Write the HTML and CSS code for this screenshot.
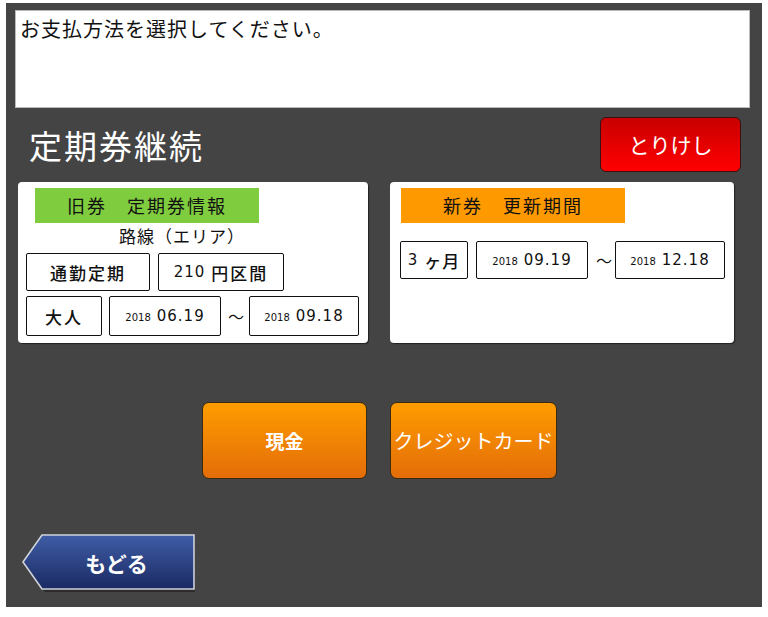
FILE: index.html
```html
<!DOCTYPE html>
<html lang="ja">
<head>
    <meta charset="UTF-8">
    <title>定期券継続 - お支払方法</title>
    <link rel="stylesheet" href="styles.css">
</head>
<body>
    <div class="screen">
        <div class="message">お支払方法を選択してください。</div>

        <div class="title-row">
            <h1>定期券継続</h1>
            <button class="btn-cancel">とりけし</button>
        </div>

        <div class="cards">
            <div class="card card-old">
                <div class="label label-green">旧券　定期券情報</div>
                <div class="route">路線（エリア）</div>
                <div class="box-row row-first">
                    <div class="box w-kind">通勤定期</div>
                    <div class="box w-fare"><span class="num spaced">210</span>円区間</div>
                </div>
                <div class="box-row">
                    <div class="box w-age">大人</div>
                    <div class="box w-date"><span class="year">2018</span><span class="num">06.19</span></div>
                    <span class="tilde">～</span>
                    <div class="box w-date2"><span class="year">2018</span><span class="num">09.18</span></div>
                </div>
            </div>

            <div class="card card-new">
                <div class="label label-orange">新券　更新期間</div>
                <div class="box-row row-new">
                    <div class="box w-months"><span class="num spaced">3</span>ヶ月</div>
                    <div class="box w-date"><span class="year">2018</span><span class="num">09.19</span></div>
                    <span class="tilde">～</span>
                    <div class="box w-date2"><span class="year">2018</span><span class="num">12.18</span></div>
                </div>
            </div>
        </div>

        <div class="pay-row">
            <button class="btn-pay pay-cash">現金</button>
            <button class="btn-pay pay-card">クレジットカード</button>
        </div>

        <div class="back-row">
            <button class="btn-back">
                <svg class="back-shape" width="175" height="58" viewBox="0 0 175 58">
                    <defs>
                        <linearGradient id="backGrad" x1="0" y1="0" x2="0" y2="1">
                            <stop offset="0" stop-color="#3f5da6"/>
                            <stop offset="1" stop-color="#1b2a63"/>
                        </linearGradient>
                    </defs>
                    <polygon points="4,30 23,2 173,2 173,58 23,58" fill="#1a1a1a" opacity="0.6"/>
                    <polygon points="1,28 20,1 172,1 172,55 20,55" fill="url(#backGrad)" stroke="#cfd3da" stroke-width="1.6"/>
                </svg>
                <span class="back-text">もどる</span>
            </button>
        </div>
    </div>
</body>
</html>
```

FILE: styles.css
```css
body {
    margin: 0;
    background: #fff;
    font-family: "Noto Sans CJK JP", "DejaVu Sans", sans-serif;
}
.screen {
    margin: 3px 0 0 6px;
    width: 756px;
    height: 604px;
    background-color: #444;
    box-sizing: border-box;
    padding: 7px 12px 0 9px;
    display: flex;
    flex-direction: column;
}
.message {
    height: 98px;
    background: #fff;
    border: 1px solid #bbb;
    box-sizing: border-box;
    padding: 5px 4px;
    font-size: 20px;
    line-height: 26px;
    letter-spacing: 1px;
    color: #111;
}
.title-row {
    display: flex;
    justify-content: space-between;
    align-items: center;
    margin-top: 9px;
    padding-left: 14px;
}
h1 {
    margin: 0;
    font-size: 33px;
    font-weight: normal;
    color: #fff;
    letter-spacing: 2px;
}
.btn-cancel {
    width: 141px;
    height: 55px;
    border: 1px solid #3a1010;
    border-radius: 6px;
    background: linear-gradient(#c90000, #ff0000);
    color: #fff;
    font-family: inherit;
    font-size: 21px;
    padding: 0 0 2px;
    margin-right: 9px;
}
.cards {
    display: flex;
    gap: 22px;
    margin-top: 10px;
    padding-left: 3px;
}
.card {
    background: #fff;
    border-radius: 4px;
    height: 161px;
    box-sizing: border-box;
    padding-top: 6px;
    box-shadow: 1px 1px 1px rgba(0, 0, 0, 0.5);
}
.card-old {
    width: 350px;
    padding-left: 8px;
}
.card-new {
    width: 344px;
    padding-left: 10px;
}
.label {
    width: 224px;
    height: 35px;
    line-height: 35px;
    text-align: center;
    font-size: 18px;
    letter-spacing: 2px;
    color: #111;
}
.label-green {
    background-color: #7fcc3f;
    margin-left: 9px;
}
.label-orange {
    background-color: #ff9900;
    margin-left: 1px;
}
.route {
    text-align: center;
    width: 312px;
    font-size: 17px;
    line-height: 20px;
    letter-spacing: 1px;
    margin-top: 3px;
    color: #111;
}
.box-row {
    display: flex;
    align-items: center;
    gap: 7px;
    margin-top: 5px;
}
.row-first {
    margin-top: 7px;
    gap: 8px;
}
.row-new {
    margin-top: 18px;
    gap: 8px;
}
.box {
    height: 40px;
    border: 1.5px solid #111;
    border-radius: 2px;
    box-sizing: border-box;
    display: flex;
    align-items: center;
    justify-content: center;
    font-size: 17px;
    font-weight: 500;
    letter-spacing: 2px;
    color: #111;
}
.row-first .box {
    height: 38px;
}
.row-new .box {
    height: 38px;
}
.w-kind { width: 124px; }
.w-fare { width: 126px; }
.w-age { width: 76px; }
.w-date { width: 112px; }
.w-date2 { width: 110px; }
.w-months { width: 68px; letter-spacing: 1px; }
.num {
    font-family: "DejaVu Sans", sans-serif;
    font-size: 15px;
    letter-spacing: 1px;
}
.num.spaced {
    margin-right: 6px;
}
.box .year {
    font-family: "DejaVu Sans", sans-serif;
    font-size: 10px;
    letter-spacing: 0;
    margin-right: 6px;
    padding-top: 3px;
}
.tilde {
    font-size: 16px;
    color: #111;
    width: 14px;
    text-align: center;
}
.row-new .tilde {
    width: 11px;
}
.pay-row {
    display: flex;
    gap: 23px;
    margin-top: 59px;
    padding-left: 187px;
}
.btn-pay {
    height: 77px;
    border: 1px solid #3a2a10;
    border-radius: 7px;
    background: linear-gradient(#ff9c00, #e36d08);
    color: #fff;
    font-family: inherit;
    font-size: 19px;
    font-weight: bold;
    padding: 0;
}
.pay-cash { width: 165px; }
.pay-card { width: 167px; font-weight: normal; font-size: 20px; }
.back-row {
    margin-top: 55px;
    padding-left: 7px;
}
.btn-back {
    position: relative;
    width: 175px;
    height: 58px;
    border: none;
    background: none;
    padding: 0;
    font-family: inherit;
}
.back-shape {
    position: absolute;
    left: 0;
    top: 0;
}
.back-text {
    position: relative;
    display: block;
    padding-left: 14px;
    color: #fff;
    font-size: 21px;
    font-weight: bold;
    line-height: 56px;
    text-align: center;
}
```
